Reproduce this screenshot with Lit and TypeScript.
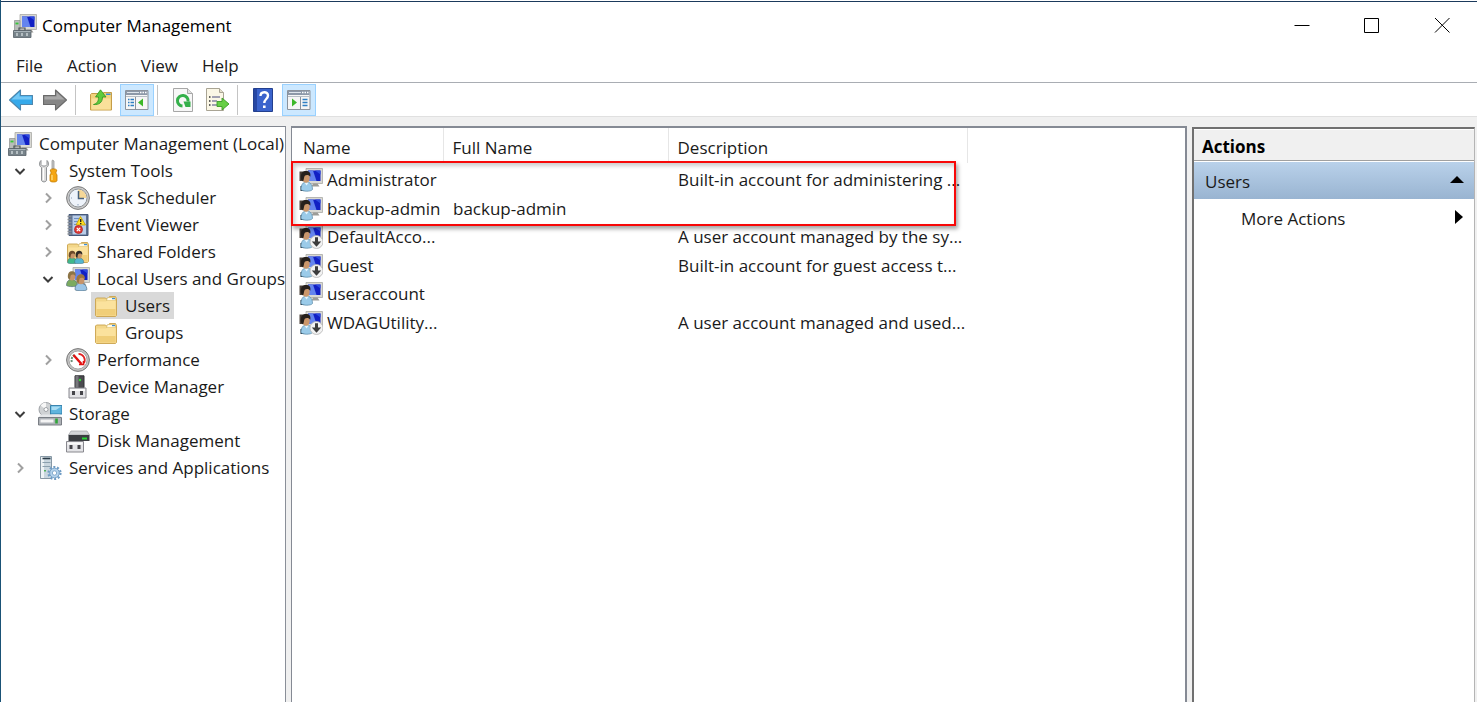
import { LitElement, html, css, svg, nothing, type TemplateResult } from "lit";
import { customElement } from "lit/decorators.js";
import { classMap } from "lit/directives/class-map.js";

const screen = svg`
  <path d="M7 .500h16.500v15H7z" fill="#d9d9d4" stroke="#a9a9a4" stroke-width=".8"/>
  <path d="M9 2.500h12.500v10.500H9z" fill="#1220c4"/>
  <path d="M9 2.500h5l3.500 10.500H9z" fill="#6484ee"/>
  <path d="M16 2.500h5.500v4z" fill="#2e4be0"/>
  <path d="M14 15.500h4.500l2 3h-8z" fill="#9c9c98"/>`;

const person = (x: number, y: number, hair: string, shirt: string, scale = 1) => svg`
  <g transform="translate(${x} ${y}) scale(${scale})">
    <path d="M0 14.500c0-4 2-6 5-6s6 2 6 6c-1.500 1.500-9.500 1.500-11 0z" fill=${shirt} stroke="#4c6a7c" stroke-width=".6"/>
    <ellipse cx="5.500" cy="5.500" rx="3.200" ry="4" fill="#c89468"/>
    <path d="M1.500 7C.8 2 3 .2 5.500.2S9.800 2 9 5.200C8 3.200 5.500 3 4.500 4 3.500 5 4 8 3 9z" fill=${hair}/>
  </g>`;

const folder = svg`
  <path d="M1.500 5l1-1h9l1 1h2l1-2.500h6l1 2v17l-1 1h-19l-1-1z" fill="#f3d78a" stroke="#c9a34d" stroke-width=".9"/>
  <path d="M13.500 3.500h8v3h-9z" fill="#fffbe8" stroke="#cfae5c" stroke-width=".6"/>
  <path d="M18 4h3v1.200h-3z" fill="#3b8fd8"/>
  <path d="M2.500 7.500h9.500l1.500-1h8v15h-19z" fill="#fbe29d"/>
  <path d="M2.500 15h19v6.500h-19z" fill="#f0ce78"/>`;

const connector = svg`
  <path d="M3 13h17v10H3z" fill="#e3e3e6" stroke="#88888e"/>
  <path d="M4 14h15v2H4z" fill="#fafafa"/>
  <path d="M6 16h3v4H6zM14 16h3v4h-3z" fill="#45454a"/>`;

const windowFrame = svg`
  <path d="M.500 2.500h22.500v19H.500z" fill="#f6f6f6" stroke="#8b929c"/>
  <path d="M1 3h21.500v4H1z" fill="#8d98a8"/>
  <path d="M2 4.500h12" stroke="#dfe5ec"/>
  <path d="M15 4.500h1.500M17.500 4.500H19M20 4.500h1.500" stroke="#fff" stroke-width="1.500"/>
  <path d="M1 8.500h21.500" stroke="#b8bec6"/>`;

const computer = svg`${screen}
  <path d="M1.500 6.500h5.500v10H1.500z" fill="#b9bdba" stroke="#8b8f8d" stroke-width=".7"/>
  <path d="M2.500 9.500h3" stroke="#35c838" stroke-width="1.800"/>
  <path d="M6 14h6v3H6z" fill="none" stroke="#4d5357" stroke-width="1.200"/>
  <path d="M.500 16.500h17.500v7H.500z" fill="#77838a" stroke="#566067" stroke-width=".8"/>
  <path d="M1 17.500h16.500" stroke="#a9b4ba"/>
  <path d="M4 19v3M9 19v3M14 19v3" stroke="#d6dde1" stroke-width="1.300"/>`;

const userShape = svg`
  ${screen}
  <path d="M.500 3.500h7v9.500h-7z" fill="#4a4038"/>
  <path d="M1.500 18h5v5h-5z" fill="#25313b"/>
  <g transform="translate(.5 2.500)">
    <path d="M1.500 19c0-5 2-7.500 5.500-7.500s6 2.500 6 7.500c-1.500 2.300-10 2.300-11.500 0z" fill="#9bcbe9" stroke="#5687a5" stroke-width=".7"/>
    <path d="M5 12l2 3 2.200-3z" fill="#e6f4fc"/>
    <ellipse cx="6.500" cy="7.500" rx="3.700" ry="4.800" fill="#cb976b"/>
    <path d="M1.500 9C.5 3 3 .5 6.500.5s5 2 4.300 5.700C9.500 4 6.500 4 5.300 5.200 4.300 6.500 4.500 9.500 3.500 11z" fill="#26201c"/>
  </g>`;

const icons: Record<string, TemplateResult> = {
  computer,
  user: userShape,
  disabledUser: svg`${userShape}
    <circle cx="17.500" cy="17" r="6.500" fill="#f2f2f2" stroke="#b5b5b5" stroke-width=".8"/>
    <path d="M16 12.200h3v4.300h3.200l-4.700 5.200-4.700-5.200H16z" fill="#3c3c3c"/>`,
  tools: svg`
    <path d="M3 1.500C.8 3.500 1 7 3.500 8.500V21c0 2.500 5 2.500 5 0V8.500C11 7 11.200 3.500 9 1.500v4L7.500 7h-3L3 5.500z" fill="#dcdcdc" stroke="#83878a" stroke-width=".9"/>
    <path d="M5.500 9v12" stroke="#fff" stroke-width="1.200"/>
    <path d="M14.500 1l1.500 1v8h-2V2z" fill="#c9c9c9" stroke="#8a8a8a" stroke-width=".7"/>
    <path d="M12.200 11c1-1.500 5.600-1.500 6.600 0l-1 3 1.200 2v5.500c0 2-7 2-7 0V16l1.200-2z" fill="#f5a613" stroke="#c27c05" stroke-width=".8"/>
    <path d="M14 16v5" stroke="#ffdf80" stroke-width="1.300"/>`,
  clock: svg`
    <circle cx="12" cy="12" r="11.400" fill="#c9c9c9" stroke="#7d7d7d"/>
    <circle cx="12" cy="12" r="9" fill="#eef3fa" stroke="#8f9499"/>
    <path d="M12 12V3.500A8.500 8.500 0 0 1 20.500 12z" fill="#f5d797"/>
    <path d="M12.500 5V12.500h5.500" fill="none" stroke="#49617c" stroke-width="1.500"/>
    <path d="M12 18v1.500M5 12h1" stroke="#8ca0b8"/>`,
  events: svg`
    <path d="M3 1.500h19v21H3z" fill="#5d7191" stroke="#46597a"/>
    <path d="M6.500 2.500H20v19H6.500z" fill="#b9cde9"/>
    <path d="M8 5.500h6M8 8.500h4M8 11.500h4M8 18.500h2" stroke="#6f8fc0"/>
    <path d="M1.500 3.500h4M1.500 6.500h4M1.500 9.500h4M1.500 12.500h4M1.500 15.500h4M1.500 18.500h4M1.500 21h4" stroke="#8a8f96" stroke-width="1.300"/>
    <path d="M14.500 3.500l5 8.500h-9.500z" fill="#ffdf22" stroke="#c39a00" stroke-width=".8"/>
    <path d="M14.700 6v3M14.700 10v1.200" stroke="#222" stroke-width="1.400"/>
    <circle cx="12.500" cy="16.500" r="4" fill="#e13b36" stroke="#a81d1a" stroke-width=".7"/>
    <path d="M10.800 14.800l3.400 3.400M14.200 14.800l-3.400 3.400" stroke="#fff" stroke-width="1.200"/>`,
  shared: svg`${folder}${person(1.5, 10.5, "#6b4a2a", "#3fb98a", 0.85)}${person(8.5, 10.5, "#2f2a26", "#54b6cf", 0.85)}`,
  group: svg`${screen}${person(0.5, 4, "#8d7445", "#7cab5f")}${person(9, 7, "#9a7440", "#9cc5e6", 1.08)}`,
  folder,
  gauge: svg`
    <circle cx="12" cy="12" r="11.400" fill="#c2c2c2" stroke="#777"/>
    <circle cx="12" cy="12" r="9" fill="#fff" stroke="#999" stroke-width=".8"/>
    <path d="M5.800 14A6.500 6.500 0 0 1 9 6.500" fill="none" stroke="#6b8f77" stroke-width="2" stroke-dasharray="2 1"/>
    <path d="M12.500 5.800a6.300 6.300 0 0 1 5.500 9.200" fill="none" stroke="#e02020" stroke-width="1.800"/>
    <path d="M7.500 7l8 9" stroke="#e01010" stroke-width="2.400"/>
    <path d="M17.500 13v3.500H13" fill="none" stroke="#e01010" stroke-width="1.600"/>`,
  device: svg`
    <path d="M9 .800h9v12H9z" fill="#4b4b4f" stroke="#2f2f33"/>
    <path d="M9.500 1h3v11.500h-3z" fill="#77777c"/>
    <circle cx="14" cy="5" r="1.200" fill="#35e03a"/>${connector}`,
  disk: svg`
    <path d="M5 2h16l2.500 4H2.500z" fill="#d3d5d8" stroke="#a0a3a7" stroke-width=".7"/>
    <path d="M2.500 6h21V12h-21z" fill="#3a3d41"/>
    <path d="M16 9.500h5" stroke="#27d536" stroke-width="2"/>
    <path d="M.500 12.500h17v10.500H.500z" fill="#e3e3e6" stroke="#88888e"/>
    <path d="M1.500 13.500h15v2h-15z" fill="#fafafa"/>
    <path d="M3.500 16h3v4h-3zM11.500 16h3v4h-3z" fill="#45454a"/>`,
  storage: svg`
    <circle cx="8" cy="7.500" r="7" fill="#cfd2d4" stroke="#8d9195" stroke-width=".8"/>
    <path d="M8 7.500L2.500 3.500A7 7 0 0 1 8 .500z" fill="#f7f7f7"/>
    <circle cx="8" cy="7.500" r="2" fill="#fff" stroke="#8d9195" stroke-width=".8"/>
    <path d="M12.500 3.500H24v8.500H12.500z" fill="#5fb4dd" stroke="#2e7ca8" stroke-width=".9"/>
    <path d="M13.500 4.500H23l-5 3.500h-4.500z" fill="#a9dcf3"/>
    <path d="M2.500 12.500h19l2.500 3H.500z" fill="#e5e7e9"/>
    <path d="M.500 15.500h23v7.500H.500z" fill="#aeb2b7" stroke="#6f747a" stroke-width=".9"/>
    <path d="M2.500 17.500h13v3h-13z" fill="#f4f4f4"/>
    <path d="M18.500 16.500v5" stroke="#30a63a" stroke-width="2.600"/>`,
  services: svg`
    <path d="M2.500.500h11v22h-11z" fill="#c9d6df" stroke="#8798a5"/>
    <path d="M3 1h3v21H3z" fill="#eef3f6"/>
    <path d="M4.500 2.500h8" stroke="#2b3c48" stroke-width="1.600"/>
    <path d="M4.500 6.500h8M4.500 10.500h8" stroke="#8ba0ae" stroke-width="1.200"/>
    <path d="M7 14v1.500" stroke="#35a83b" stroke-width="1.600"/>
    <circle cx="16.500" cy="17" r="6" fill="none" stroke="#6f9cc4" stroke-width="2.200" stroke-dasharray="2 1.770"/>
    <circle cx="16.500" cy="17" r="4.800" fill="#b5d3ec" stroke="#6f9cc4" stroke-width=".9"/>
    <circle cx="16.500" cy="17" r="2.200" fill="#fff" stroke="#6f9cc4" stroke-width=".8"/>`,
  back: svg`
    <path d="M.500 12L11.500 2v5.500h12v9h-12V22z" fill="#35a9ea" stroke="#4f87ad" stroke-width="1.100" stroke-linejoin="round"/>
    <path d="M2.500 11.500L10.500 4.300v4.200h12v3z" fill="#74c8f5"/>`,
  forward: svg`
    <path d="M23.500 12L12.500 2v5.500H.500v9h12V22z" fill="#868686" stroke="#6a6a6a" stroke-width="1.100" stroke-linejoin="round"/>
    <path d="M21.500 11.500L13.500 4.300v4.200h-12v3z" fill="#a8a8a8"/>`,
  up: svg`
    <path d="M1.500 6.500l1-1h7l1 2h3l1-3h8v17.500h-21z" fill="#f2d27c" stroke="#c59d48"/>
    <path d="M2.500 10.500h19v11h-19z" fill="#fae09a"/>
    <path d="M17 5.500h4.500v1.500H17z" fill="#3b8fd8"/>
    <path d="M4.500 16.500c4-1 5-3.500 5-7.500H6.500L11.500 1.800 17 9h-3.500c0 5.500-3.500 8-9 7.500z" fill="#5fcb3c" stroke="#2f9420" stroke-width=".8"/>`,
  tree: svg`${windowFrame}
    <path d="M10.500 9v12" stroke="#8b929c"/>
    <path d="M3 11.500h1.500M5.500 11.500H9M3 14.500h1.500M5.500 14.500H9M3 17.500h1.500M5.500 17.500H9" stroke="#2f7fc4" stroke-width="1.500"/>
    <path d="M18 10.500v8L13 14.500z" fill="#3cb829"/>`,
  pane: svg`${windowFrame}
    <path d="M13.500 9v12" stroke="#8b929c"/>
    <path d="M15.500 11.500h5M15.500 14.500h5M15.500 17.500h5" stroke="#2f7fc4" stroke-width="1.500"/>
    <path d="M5 10.500v8l5-4z" fill="#3cb829"/>`,
  refresh: svg`
    <path d="M2.500.500h14l5 5v18h-19z" fill="#f7f7f7" stroke="#a7a7a7"/>
    <path d="M16.500.500v5h5" fill="#e0e0e0" stroke="#a7a7a7"/>
    <path d="M11.500 18A5.300 5.300 0 1 1 17 13.500" fill="none" stroke="#34b04a" stroke-width="3"/>
    <path d="M12.500 13.500h7V19h-5z" fill="#34b04a"/>`,
  export: svg`
    <path d="M1.500.500h13l4 4v18h-17z" fill="#fbf7e6" stroke="#a9a494"/>
    <path d="M14.500.500v4h4" fill="#e6e0cc" stroke="#a9a494"/>
    <path d="M4 9h1.500M4 13h1.500M4 17h1.500" stroke="#333" stroke-width="1.600"/>
    <path d="M7 9h8M7 13h5M7 17h5" stroke="#8585a0" stroke-width="1.400"/>
    <path d="M12 13.500h5V10l7 6-7 6v-3.500h-5z" fill="#67cf45" stroke="#3c9c27" stroke-width=".9"/>`,
  help: svg`
    <path d="M2.500.500h19v23h-19z" fill="#3a63cc" stroke="#23408f"/>
    <path d="M3 1h3v22H3z" fill="#2747a3"/>
    <path d="M9.500 8c0-5 7.500-5 7.500-.500 0 3.500-3.700 3.500-3.700 7.500" fill="none" stroke="#fff" stroke-width="2.400"/>
    <path d="M12 17.500h2.600V20H12z" fill="#fff"/>`,
};

const icon = (name: string) =>
  html`<svg class="icon" viewBox="0 0 24 24" aria-hidden="true">${icons[name]}</svg>`;

interface TreeNode {
  label: string;
  icon: string;
  open?: boolean;
  closed?: boolean;
  selected?: boolean;
  children?: TreeNode[];
}

const tree: TreeNode = {
  label: "Computer Management (Local)",
  icon: "computer",
  children: [
    {
      label: "System Tools",
      icon: "tools",
      open: true,
      children: [
        { label: "Task Scheduler", icon: "clock", closed: true },
        { label: "Event Viewer", icon: "events", closed: true },
        { label: "Shared Folders", icon: "shared", closed: true },
        {
          label: "Local Users and Groups",
          icon: "group",
          open: true,
          children: [
            { label: "Users", icon: "folder", selected: true },
            { label: "Groups", icon: "folder" },
          ],
        },
        { label: "Performance", icon: "gauge", closed: true },
        { label: "Device Manager", icon: "device" },
      ],
    },
    {
      label: "Storage",
      icon: "storage",
      open: true,
      children: [{ label: "Disk Management", icon: "disk" }],
    },
    { label: "Services and Applications", icon: "services", closed: true },
  ],
};

const users = [
  { name: "Administrator", full: "", about: "Built-in account for administering ...", off: false },
  { name: "backup-admin", full: "backup-admin", about: "", off: false },
  { name: "DefaultAcco...", full: "", about: "A user account managed by the sy...", off: true },
  { name: "Guest", full: "", about: "Built-in account for guest access t...", off: true },
  { name: "useraccount", full: "", about: "", off: false },
  { name: "WDAGUtility...", full: "", about: "A user account managed and used...", off: true },
];

const base = css`
  * { box-sizing: border-box; }
  button {
    font: inherit;
    color: inherit;
    background: none;
    border: 0;
    padding: 0;
    margin: 0;
    text-align: left;
    white-space: nowrap;
  }
  .icon { width: 24px; height: 24px; flex: none; display: block; }
`;

@customElement("console-tree")
export class ConsoleTree extends LitElement {
  static styles = [base, css`
    :host { display: block; }
    ul { list-style: none; margin: 0; padding: 0; }
    .branch { padding-left: 28px; }
    .row { display: flex; height: 27px; padding-left: 6px; }
    .root { padding-left: 3px; }
    .chevron { width: 24px; margin-right: 3px; flex: none; display: grid; place-items: center; }
    .chevron svg { width: 12px; height: 12px; fill: none; stroke: #a0a0a0; stroke-width: 2; }
    .chevron.open svg { stroke: #3c3c3c; }
    .label { display: flex; align-items: center; flex: none; gap: 7px; padding: 0 4px 0 3px; }
    .selected { background: #d9d9d9; }
  `];

  private chevron(n: TreeNode) {
    if (!n.open && !n.closed) return html`<span class="chevron"></span>`;
    return html`<button
      class=${classMap({ chevron: true, open: !!n.open })}
      aria-label=${n.open ? "Collapse" : "Expand"}
    ><svg viewBox="0 0 12 12"><path d=${n.open ? "M1.500 4L6 8.500 10.500 4" : "M4 1.500L8.500 6 4 10.500"}></path></svg></button>`;
  }

  private node(n: TreeNode): TemplateResult {
    return html`<li>
      <div class="row">
        ${this.chevron(n)}
        <button class=${classMap({ label: true, selected: !!n.selected })}>${icon(n.icon)}<span>${n.label}</span></button>
      </div>
      ${n.children ? html`<ul class="branch">${n.children.map((c) => this.node(c))}</ul>` : nothing}
    </li>`;
  }

  render() {
    return html`<div class="row root"><button class="label">${icon(tree.icon)}<span>${tree.label}</span></button></div>
      <ul>${tree.children!.map((c) => this.node(c))}</ul>`;
  }
}

@customElement("app-root")
export class AppRoot extends LitElement {
  static styles = [base, css`
    :host {
      display: flex;
      flex-direction: column;
      height: 100vh;
      overflow: hidden;
      border-left: 1px solid #1a5276;
      background: #fff;
      color: #1a1a1a;
      font: 17px/24px "Open Sans", "Noto Sans", sans-serif;
    }
    .title {
      display: flex;
      align-items: center;
      height: 48px;
      flex: none;
      margin-top: 1px;
      border-top: 1px solid #1b3a5c;
      padding-left: 12px;
      gap: 5px;
      color: #000;
    }
    h1 { flex: 1; font: inherit; margin: 0; }
    .controls { display: flex; align-self: stretch; padding-bottom: 2px; }
    .controls button { width: 70px; display: grid; place-items: center; }
    .controls svg { width: 16px; height: 16px; fill: none; stroke: #000; }
    .menu { display: flex; gap: 24px; padding: 5px 15px 4px; height: 33px; flex: none; }
    .toolbar {
      display: flex;
      align-items: center;
      height: 35px;
      flex: none;
      border-top: 1px solid #a9adb3;
      border-bottom: 1px solid #e0e0e0;
      padding: 1px 0 0 3px;
    }
    .toolbar button { width: 34px; height: 32px; display: grid; place-items: center; }
    .toolbar .on { background: #cce8ff; border: 1px solid #99d1ff; margin-left: 2px; }
    .sep { width: 1px; height: 30px; background: #c4c4c4; margin: 0 8px 0 3px; }
    .body {
      display: grid;
      grid-template-columns: 285px minmax(0, 1fr) 283px;
      gap: 5px;
      flex: 1;
      min-height: 0;
      padding: 9px 2px 0 0;
      background: #f0f0f0;
    }
    .pane { background: #fff; border: 1px solid #828790; border-bottom: 0; min-width: 0; }
    .nav { border-left: 0; padding: 3px 0 0 1px; border-right-color: #8a8f98; overflow: hidden; }
    .list { position: relative; border-width: 2px 2px 0 1px; border-color: #858a94; }
    table { border-collapse: collapse; table-layout: fixed; width: 676px; }
    .c1 { width: 151px; }
    .c2 { width: 225px; }
    th { height: 35px; padding: 5px 9px 0; font-weight: 400; text-align: left; border-right: 1px solid #e6e6e6; }
    th:first-child { padding-left: 11px; }
    td { height: 28px; padding: 0 0 0 10px; white-space: nowrap; }
    tbody tr:nth-child(even) td { height: 29px; }
    tbody::before { content: ""; display: block; height: 3px; }
    .user { padding: 0 0 0 7px; }
    .name { display: flex; align-items: center; gap: 4px; height: 24px; }
    .marker {
      position: absolute;
      left: -1px;
      top: 33px;
      width: 665px;
      height: 65px;
      border: 2px solid #f80808;
      box-shadow: 2px 3px 4px rgba(0, 0, 0, 0.35), inset 2px 3px 4px rgba(0, 0, 0, 0.2);
      pointer-events: none;
    }
    .actions { border-width: 2px 1px 0 2px; border-color: #707070 #b4b4b4 #707070 #707070; margin-top: 1px; }
    .actions h2 {
      margin: 1px 0;
      height: 31px;
      padding: 5px 8px 0;
      font: inherit;
      font-weight: 700;
      color: #000;
      background: #f0f0f0;
      border-bottom: 1px solid #a0a0a0;
    }
    .group, .more { display: flex; align-items: center; justify-content: space-between; width: 100%; height: 37px; }
    .group { padding: 2px 10px 0 11px; background: linear-gradient(#b9d1ea, #99b4d1); }
    .more { padding: 2px 11px 0 47px; }
    .up { width: 14px; height: 7px; margin-bottom: 4px; }
    .right { width: 8px; height: 14px; margin-bottom: 4px; }
  `];

  private tool(name: string, label: string, on = false) {
    return html`<button class=${classMap({ on })} aria-label=${label}>${icon(name)}</button>`;
  }

  render() {
    return html`
      <header class="title">
        ${icon("computer")}
        <h1>Computer Management</h1>
        <div class="controls">
          <button aria-label="Minimize"><svg viewBox="0 0 16 16"><path d="M.500 8.500h15"></path></svg></button>
          <button aria-label="Maximize"><svg viewBox="0 0 16 16"><path d="M.500 1.500h14v14H.500z"></path></svg></button>
          <button aria-label="Close"><svg viewBox="0 0 16 16"><path d="M1 1l14.500 14.500M15.500 1L1 15.500"></path></svg></button>
        </div>
      </header>
      <nav class="menu">
        <button>File</button><button>Action</button><button>View</button><button>Help</button>
      </nav>
      <div class="toolbar" role="toolbar">
        ${this.tool("back", "Back")}${this.tool("forward", "Forward")}
        <span class="sep"></span>
        ${this.tool("up", "Up one level")}${this.tool("tree", "Show console tree", true)}
        <span class="sep"></span>
        ${this.tool("refresh", "Refresh")}${this.tool("export", "Export list")}
        <span class="sep"></span>
        ${this.tool("help", "Help")}${this.tool("pane", "Show action pane", true)}
      </div>
      <main class="body">
        <section class="pane nav"><console-tree></console-tree></section>
        <section class="pane list">
          <table>
            <colgroup><col class="c1"><col class="c2"><col></colgroup>
            <thead><tr><th>Name</th><th>Full Name</th><th>Description</th></tr></thead>
            <tbody>
              ${users.map((u) => html`<tr>
                <td class="user"><div class="name">${icon(u.off ? "disabledUser" : "user")}<span>${u.name}</span></div></td>
                <td>${u.full}</td>
                <td>${u.about}</td>
              </tr>`)}
            </tbody>
          </table>
          <div class="marker"></div>
        </section>
        <aside class="pane actions">
          <h2>Actions</h2>
          <button class="group">Users<svg class="up" viewBox="0 0 14 7"><path d="M7 0l7 7H0z"></path></svg></button>
          <button class="more">More Actions<svg class="right" viewBox="0 0 8 14"><path d="M0 0l8 7-8 7z"></path></svg></button>
        </aside>
      </main>
    `;
  }
}
